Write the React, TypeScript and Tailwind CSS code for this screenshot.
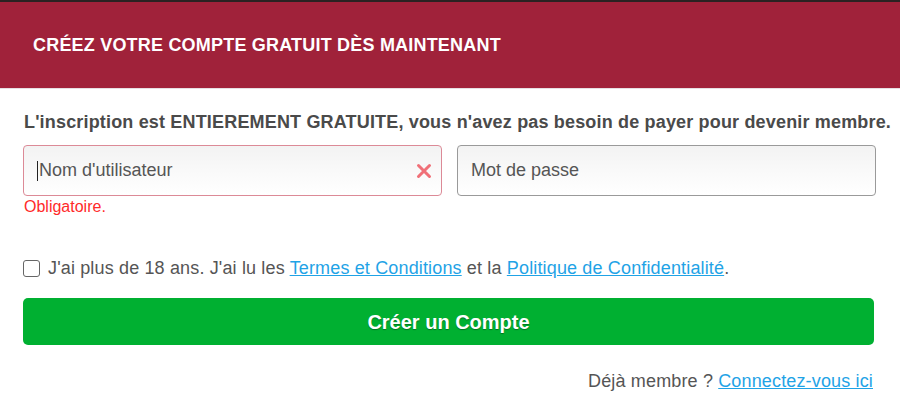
import React from "react";

export default function App() {
  return (
    <div className="w-[900px] h-[419px] bg-white overflow-hidden" style={{ fontFamily: '"Liberation Sans", Arial, sans-serif' }}>
      <div className="h-[2px] bg-[#2a2222]" />
      <div className="h-[86px] bg-[#a0223a] flex items-center pl-[33px]">
        <h1 className="text-white font-bold text-[18px] tracking-[0.2px] mt-[1px]">CRÉEZ VOTRE COMPTE GRATUIT DÈS MAINTENANT</h1>
      </div>
      <div className="h-[1px] bg-[#e6dfe2]" />
      <div className="px-[23px] pt-[21px]">
        <p className="text-[18px] font-bold text-[#4a4a4a] pl-[1px] leading-[24px] whitespace-nowrap tracking-[0.17px]">
          L'inscription est ENTIEREMENT GRATUITE, vous n'avez pas besoin de payer pour devenir membre.
        </p>
        <div className="flex gap-[15px] mt-[11px]">
          <div className="w-[419px]">
            <div className="relative h-[51px] rounded-[4px] border border-[#dc8a97] bg-gradient-to-b from-[#f3f3f3] to-[#ffffff] flex items-center pl-[13px]">
              <span className="w-[1px] h-[20px] bg-[#222] mr-[1px]" />
              <span className="text-[18px] text-[#555]">Nom d'utilisateur</span>
              <svg className="absolute right-[9px] top-[17px]" width="16" height="16" viewBox="0 0 16 16">
                <path d="M2.5 2.5 L13.5 13.5 M13.5 2.5 L2.5 13.5" stroke="#f07078" strokeWidth="3" strokeLinecap="round" />
              </svg>
            </div>
            <div className="text-[16px] text-[#ff2a2a] pl-[1px] mt-[1px] leading-[20px]">Obligatoire.</div>
          </div>
          <div className="w-[419px] h-[51px] rounded-[4px] border border-[#9a9a9a] bg-gradient-to-b from-[#f3f3f3] to-[#ffffff] flex items-center pl-[13px]">
            <span className="text-[18px] text-[#555]">Mot de passe</span>
          </div>
        </div>
        <div className="flex items-center mt-[40px] h-[22px]">
          <span className="w-[17px] h-[17px] rounded-[3px] border border-[#666] bg-white inline-block" />
          <span className="ml-[8px] text-[18px] text-[#555] whitespace-nowrap tracking-[0.15px]">
            J'ai plus de 18 ans. J'ai lu les{" "}
            <a className="text-[#1fa3e6] underline">Termes et Conditions</a> et la{" "}
            <a className="text-[#1fa3e6] underline">Politique de Confidentialité</a>.
          </span>
        </div>
        <button className="mt-[19px] w-[851px] h-[47px] rounded-[5px] bg-[#00b031] text-white font-bold text-[20px] flex items-center justify-center" style={{ textShadow: "0 1px 1px rgba(0,0,0,0.35)" }}>
          Créer un Compte
        </button>
        <div className="w-[850px] text-right mt-[23px] text-[18px] text-[#555] tracking-[0.15px]">
          Déjà membre ? <a className="text-[#1fa3e6] underline">Connectez-vous ici</a>
        </div>
      </div>
    </div>
  );
}
